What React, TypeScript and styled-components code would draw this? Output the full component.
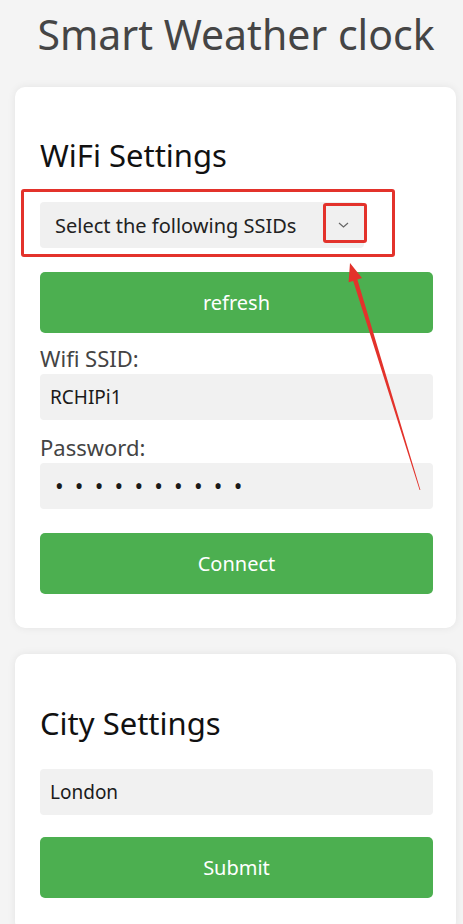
import styled, { createGlobalStyle } from "styled-components";

const GlobalStyle = createGlobalStyle`
  * {
    box-sizing: border-box;
  }
  body {
    margin: 0;
    background: #f4f4f4;
    font-family: "Noto Sans", "Open Sans", sans-serif;
  }
`;

const Page = styled.div`
  padding: 9px 0 0;
  min-height: 924px;
`;

const Title = styled.h1`
  margin: 0 0 28px;
  padding-left: 9px;
  font-size: 41px;
  line-height: 50px;
  font-weight: 400;
  text-align: center;
  color: #454545;
`;

const Card = styled.section<{ $top: number }>`
  position: relative;
  margin: 0 7px 26px 15px;
  padding: ${(p) => p.$top}px 23px 34px 25px;
  background: #fff;
  border-radius: 10px;
  box-shadow: 0 0 8px rgba(0, 0, 0, 0.07);
  display: flex;
  flex-direction: column;
`;

const Heading = styled.h2<{ $gap: number }>`
  margin: 0 0 ${(p) => p.$gap}px;
  font-size: 31px;
  line-height: 36px;
  font-weight: 400;
  color: #111;
`;

const Select = styled.div`
  width: 324px;
  height: 46px;
  padding: 0 15px;
  display: flex;
  align-items: center;
  justify-content: space-between;
  background: #f0f0f0;
  border-radius: 4px;
  font-size: 20px;
  color: #222;
`;

const Chevron = styled.svg`
  width: 11px;
  height: 6px;
`;

const Button = styled.button<{ $gap: number }>`
  width: 100%;
  height: 61px;
  margin-top: ${(p) => p.$gap}px;
  border: none;
  border-radius: 5px;
  background: #4caf50;
  color: #fff;
  font-family: inherit;
  font-size: 20px;
`;

const Label = styled.label<{ $gap: number }>`
  margin-top: ${(p) => p.$gap}px;
  margin-bottom: 3px;
  font-size: 22px;
  line-height: 26px;
  color: #444;
`;

const Field = styled.div<{ $dots?: boolean }>`
  height: 46px;
  padding: 0 10px 0 ${(p) => (p.$dots ? 15 : 10)}px;
  display: flex;
  align-items: center;
  background: #f1f1f1;
  border-radius: 4px;
  font-size: ${(p) => (p.$dots ? 23 : 19)}px;
  letter-spacing: ${(p) => (p.$dots ? "11.2px" : "0")};
  color: #1a1a1a;
`;

const Marker = styled.div<{ $l: number; $t: number; $w: number; $h: number }>`
  position: absolute;
  left: ${(p) => p.$l}px;
  top: ${(p) => p.$t}px;
  width: ${(p) => p.$w}px;
  height: ${(p) => p.$h}px;
  border: 3px solid #e3322b;
  border-radius: 3px;
  pointer-events: none;
`;

const Arrow = styled.svg`
  position: absolute;
  left: 305px;
  top: 163px;
  width: 120px;
  height: 250px;
  pointer-events: none;
`;

export default function App() {
  return (
    <>
      <GlobalStyle />
      <Page>
        <Title>Smart Weather clock</Title>

        <Card $top={50}>
          <Heading $gap={29}>WiFi Settings</Heading>
          <Select>
            <span>Select the following SSIDs</span>
            <Chevron viewBox="0 0 11 6">
              <path d="M1 1l4.5 4L10 1" fill="none" stroke="#666" strokeWidth="1.2" />
            </Chevron>
          </Select>
          <Button $gap={24}>refresh</Button>
          <Label $gap={12}>Wifi SSID:</Label>
          <Field>RCHIPi1</Field>
          <Label $gap={14}>Password:</Label>
          <Field $dots>••••••••••</Field>
          <Button $gap={24}>Connect</Button>

          <Marker $l={6} $t={102} $w={374} $h={68} />
          <Marker $l={308} $t={116} $w={44} $h={40} />
          <Arrow viewBox="0 0 120 250">
            <polygon
              points="30,13 42,28.1 37.4,29.6 100.4,240 99.6,240 33.2,30.9 28.6,32.3"
              fill="#e3322b"
            />
          </Arrow>
        </Card>

        <Card $top={51}>
          <Heading $gap={28}>City Settings</Heading>
          <Field>London</Field>
          <Button $gap={22}>Submit</Button>
        </Card>
      </Page>
    </>
  );
}
